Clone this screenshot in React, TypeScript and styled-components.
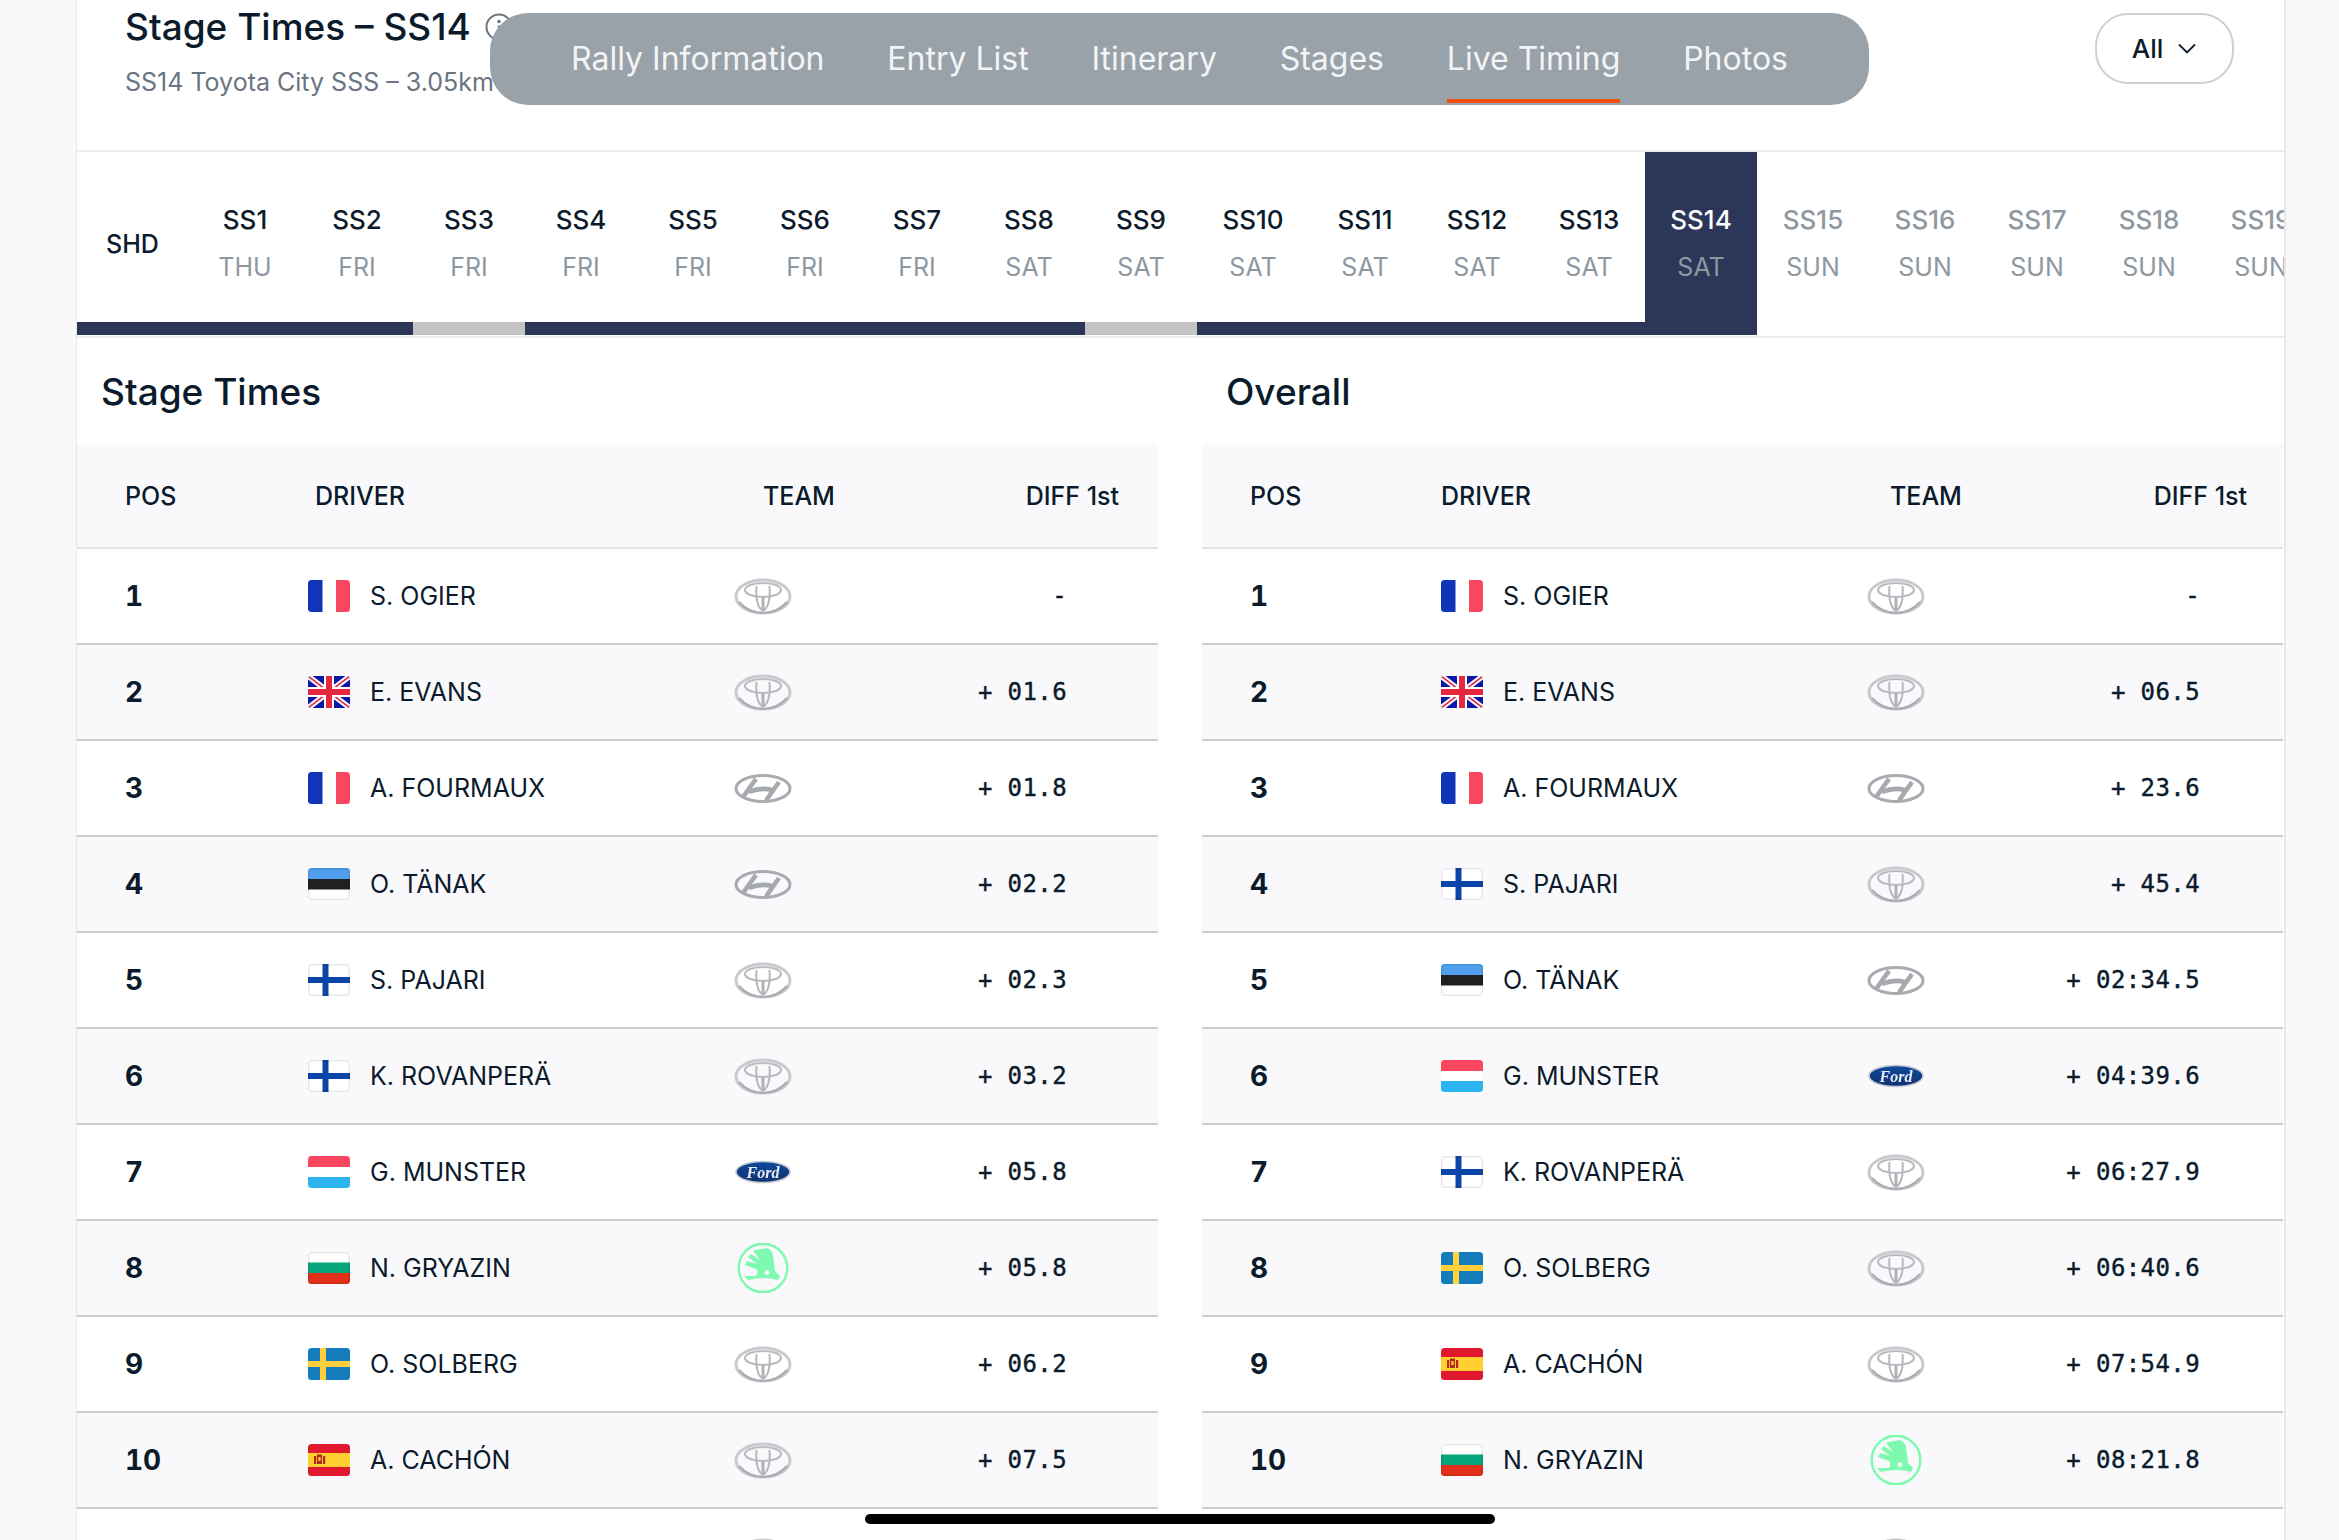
import * as React from "react";
import styled, { createGlobalStyle } from "styled-components";

type FlagCode = "fr" | "gb" | "ee" | "fi" | "lu" | "bg" | "se" | "es";
type TeamCode = "toyota" | "hyundai" | "ford" | "skoda";
type Result = { pos: number; driver: string; flag: FlagCode; team: TeamCode; diff: string };

const stageResults: Result[] = [
  { pos: 1, driver: "S. OGIER", flag: "fr", team: "toyota", diff: "-" },
  { pos: 2, driver: "E. EVANS", flag: "gb", team: "toyota", diff: "+ 01.6" },
  { pos: 3, driver: "A. FOURMAUX", flag: "fr", team: "hyundai", diff: "+ 01.8" },
  { pos: 4, driver: "O. TÄNAK", flag: "ee", team: "hyundai", diff: "+ 02.2" },
  { pos: 5, driver: "S. PAJARI", flag: "fi", team: "toyota", diff: "+ 02.3" },
  { pos: 6, driver: "K. ROVANPERÄ", flag: "fi", team: "toyota", diff: "+ 03.2" },
  { pos: 7, driver: "G. MUNSTER", flag: "lu", team: "ford", diff: "+ 05.8" },
  { pos: 8, driver: "N. GRYAZIN", flag: "bg", team: "skoda", diff: "+ 05.8" },
  { pos: 9, driver: "O. SOLBERG", flag: "se", team: "toyota", diff: "+ 06.2" },
  { pos: 10, driver: "A. CACHÓN", flag: "es", team: "toyota", diff: "+ 07.5" },
];

const overallResults: Result[] = [
  { pos: 1, driver: "S. OGIER", flag: "fr", team: "toyota", diff: "-" },
  { pos: 2, driver: "E. EVANS", flag: "gb", team: "toyota", diff: "+ 06.5" },
  { pos: 3, driver: "A. FOURMAUX", flag: "fr", team: "hyundai", diff: "+ 23.6" },
  { pos: 4, driver: "S. PAJARI", flag: "fi", team: "toyota", diff: "+ 45.4" },
  { pos: 5, driver: "O. TÄNAK", flag: "ee", team: "hyundai", diff: "+ 02:34.5" },
  { pos: 6, driver: "G. MUNSTER", flag: "lu", team: "ford", diff: "+ 04:39.6" },
  { pos: 7, driver: "K. ROVANPERÄ", flag: "fi", team: "toyota", diff: "+ 06:27.9" },
  { pos: 8, driver: "O. SOLBERG", flag: "se", team: "toyota", diff: "+ 06:40.6" },
  { pos: 9, driver: "A. CACHÓN", flag: "es", team: "toyota", diff: "+ 07:54.9" },
  { pos: 10, driver: "N. GRYAZIN", flag: "bg", team: "skoda", diff: "+ 08:21.8" },
];

const days = ["THU", "FRI", "FRI", "FRI", "FRI", "FRI", "FRI", "SAT", "SAT", "SAT", "SAT", "SAT", "SAT", "SAT", "SUN", "SUN", "SUN", "SUN", "SUN"];
const CURRENT_STAGE = 14;
const NOT_RUN = [3, 9];
const navItems = ["Rally Information", "Entry List", "Itinerary", "Stages", "Live Timing", "Photos"];

function Flag({ code }: { code: FlagCode }) {
  const clip = `flag-${code}`;
  const lightEdge = code === "ee" || code === "fi" || code === "bg";
  return (
    <FlagSvg viewBox="0 0 42 32">
      <clipPath id={clip}>
        <rect width="42" height="32" rx="3.5" />
      </clipPath>
      <g clipPath={`url(#${clip})`}>
        <rect width="42" height="32" fill="#fff" />
        {code === "fr" && (
          <>
            <rect width="14.5" height="32" fill="#1035bb" />
            <rect x="28" width="14" height="32" fill="#f8475e" />
          </>
        )}
        {code === "gb" && (
          <>
            <rect width="42" height="32" fill="#0a17a7" />
            <path d="M0 0L42 32M42 0L0 32" stroke="#fff" strokeWidth="5.5" />
            <path d="M0 0L42 32M42 0L0 32" stroke="#e6273e" strokeWidth="1.6" />
            <path d="M21 0V32M0 16H42" stroke="#fff" strokeWidth="10" />
            <path d="M21 0V32M0 16H42" stroke="#e6273e" strokeWidth="6" />
          </>
        )}
        {code === "ee" && (
          <>
            <rect width="42" height="11" fill="#4f9fee" />
            <rect y="11" width="42" height="10.5" fill="#202020" />
          </>
        )}
        {code === "fi" && <path d="M17.5 0V32M0 16H42" stroke="#0b46a8" strokeWidth="6" />}
        {code === "lu" && (
          <>
            <rect width="42" height="11" fill="#f8475e" />
            <rect y="21" width="42" height="11" fill="#2cb5f0" />
          </>
        )}
        {code === "bg" && (
          <>
            <rect y="10.5" width="42" height="11" fill="#07a67c" />
            <rect y="21" width="42" height="11" fill="#e2301a" />
          </>
        )}
        {code === "se" && (
          <>
            <rect width="42" height="32" fill="#157cbb" />
            <path d="M15 0V32M0 16H42" stroke="#ffd03b" strokeWidth="6" />
          </>
        )}
        {code === "es" && (
          <>
            <rect width="42" height="32" fill="#e1192f" />
            <rect y="9" width="42" height="14" fill="#ffd030" />
            <rect x="6" y="12" width="2.2" height="8" fill="#b5261e" />
            <rect x="9" y="10.5" width="5" height="9.5" fill="#b5261e" />
            <rect x="10.4" y="13" width="2.2" height="4" fill="#ffd030" />
            <rect x="15" y="12" width="2.2" height="8" fill="#b5261e" />
          </>
        )}
        {lightEdge && (
          <rect x="0.75" y="0.75" width="40.5" height="30.5" rx="3" fill="none" stroke="#000" strokeOpacity="0.09" strokeWidth="1.5" />
        )}
      </g>
    </FlagSvg>
  );
}

function ToyotaLogo() {
  return (
    <LogoSvg viewBox="0 0 58 37" $soft>
      <ellipse cx="29" cy="18.5" rx="27" ry="16.5" fill="none" stroke="#c8cbce" strokeWidth="3" />
      <path d="M5 24Q15 35 29 35Q43 35 53 24" fill="none" stroke="#a8acb0" strokeWidth="2.2" />
      <ellipse cx="29" cy="12" rx="18" ry="7" fill="none" stroke="#b9bcc0" strokeWidth="2.2" />
      <path d="M22.5 8Q21 28 29 33Q37 28 35.5 8" fill="none" stroke="#b4b8bc" strokeWidth="2" />
      <path d="M27.5 19H30.5V32H27.5Z" fill="#aeb2b6" />
    </LogoSvg>
  );
}

function HyundaiLogo() {
  return (
    <LogoSvg viewBox="0 0 58 37" $soft>
      <ellipse cx="29" cy="18.5" rx="27" ry="13" fill="none" stroke="#a8acb0" strokeWidth="3" />
      <path d="M22 8.8L9 27M45 12L32 30.5M15 22Q27 17 38 20" fill="none" stroke="#a6aaae" strokeWidth="4.6" />
    </LogoSvg>
  );
}

function FordLogo() {
  return (
    <LogoSvg viewBox="0 0 58 37" $soft>
      <defs>
        <linearGradient id="fordBlue" x1="0" y1="0" x2="0" y2="1">
          <stop offset="0" stopColor="#0f4a9e" />
          <stop offset="1" stopColor="#10306f" />
        </linearGradient>
      </defs>
      <ellipse cx="29" cy="18" rx="27" ry="10.5" fill="url(#fordBlue)" stroke="#c2c6ce" strokeWidth="1.6" />
      <FordMark x="29" y="23.5" textAnchor="middle">
        Ford
      </FordMark>
    </LogoSvg>
  );
}

function SkodaLogo() {
  return (
    <LogoSvg viewBox="0 0 58 50" $tall>
      <circle cx="29" cy="25" r="24.3" fill="none" stroke="#7dfab0" strokeWidth="2.4" />
      <path d="M19 7.5L33 5Q38 7 39 12L41 28L46 33L44 37Q30 33 14 37L10 33L22 33Q25 29 22 26L11 22L13 18L23 21L14 14L17 11L26 17Z" fill="#7dfab0" />
      <circle cx="33" cy="29.7" r="2.4" fill="#f9f9fb" />
    </LogoSvg>
  );
}

function TeamLogo({ team }: { team: TeamCode }) {
  if (team === "hyundai") return <HyundaiLogo />;
  if (team === "ford") return <FordLogo />;
  if (team === "skoda") return <SkodaLogo />;
  return <ToyotaLogo />;
}

function ResultsTable({
  title,
  results,
  headCols,
  bodyCols,
  headRight,
  bodyRight,
}: {
  title: string;
  results: Result[];
  headCols: string;
  bodyCols: string;
  headRight: number;
  bodyRight: number;
}) {
  return (
    <TableColumn>
      <SectionTitle>{title}</SectionTitle>
      <HeadRow $cols={headCols} $right={headRight}>
        <span>POS</span>
        <span>DRIVER</span>
        <span>TEAM</span>
        <DiffHead>DIFF 1st</DiffHead>
      </HeadRow>
      {results.map((r, idx) => (
        <Row key={r.pos} $cols={bodyCols} $right={bodyRight} $tinted={idx % 2 === 1}>
          <Pos>{r.pos}</Pos>
          <DriverCell>
            <Flag code={r.flag} />
            {r.driver}
          </DriverCell>
          <TeamLogo team={r.team} />
          <Diff>{r.diff}</Diff>
        </Row>
      ))}
      <Row $cols={bodyCols} $right={bodyRight} $tinted={false}>
        <span />
        <span />
        <ToyotaLogo />
      </Row>
    </TableColumn>
  );
}

export default function App() {
  return (
    <Page>
      <GlobalStyle />
      <Card>
        <TopBar>
          <div>
            <TitleLine>
              Stage Times – SS14
              <InfoIcon viewBox="0 0 28 28">
                <circle cx="14" cy="14" r="12.5" fill="none" stroke="#6b7480" strokeWidth="2" />
                <circle cx="14" cy="8.5" r="1.8" fill="#6b7480" />
                <path d="M14 12.5V20" stroke="#6b7480" strokeWidth="2.4" />
              </InfoIcon>
            </TitleLine>
            <Subtitle>SS14 Toyota City SSS – 3.05km</Subtitle>
          </div>
          <FilterButton>
            All
            <svg width="20" height="13" viewBox="0 0 20 13">
              <path d="M2 2.5L10 10.5L18 2.5" fill="none" stroke="#0b1b2b" strokeWidth="1.8" />
            </svg>
          </FilterButton>
        </TopBar>

        <StageStrip>
          <ShdCell>SHD</ShdCell>
          {days.map((day, idx) => {
            const stage = idx + 1;
            return (
              <StageCell
                key={stage}
                $active={stage === CURRENT_STAGE}
                $done={stage < CURRENT_STAGE}
                $skipped={NOT_RUN.includes(stage)}
              >
                <StageName>SS{stage}</StageName>
                <StageDay>{day}</StageDay>
              </StageCell>
            );
          })}
        </StageStrip>

        <Tables>
          <ResultsTable
            title="Stage Times"
            results={stageResults}
            headCols="190px 448px 80px 1fr"
            bodyCols="183px 426px 80px 1fr"
            headRight={39}
            bodyRight={91}
          />
          <ResultsTable
            title="Overall"
            results={overallResults}
            headCols="191px 449px 80px 1fr"
            bodyCols="191px 426px 80px 1fr"
            headRight={36}
            bodyRight={83}
          />
        </Tables>
      </Card>

      <NavPill>
        {navItems.map((item) => (
          <NavItem key={item} $active={item === "Live Timing"}>
            {item}
          </NavItem>
        ))}
      </NavPill>
      <HomeIndicator />
    </Page>
  );
}

const GlobalStyle = createGlobalStyle`
  html, body {
    margin: 0;
    height: 100%;
    overflow: hidden;
    background: #f8f8f8;
  }
  * {
    box-sizing: border-box;
  }
`;

const Page = styled.div`
  position: relative;
  height: 1540px;
  overflow: hidden;
  padding-left: 76px;
  font-family: Inter, "Liberation Sans", sans-serif;
  color: #0b1b2b;
`;

const Card = styled.main`
  width: 2210px;
  height: 1540px;
  background: #fff;
  border-left: 1px solid #e8e8e8;
  border-right: 2px solid #e8e8e8;
  overflow: hidden;
`;

const TopBar = styled.header`
  height: 152px;
  padding: 5px 50px 0 48px;
  display: flex;
  justify-content: space-between;
  align-items: flex-start;
  border-bottom: 2px solid #ebebeb;
`;

const TitleLine = styled.div`
  display: flex;
  align-items: center;
  gap: 14px;
  font-size: 37px;
  line-height: 44px;
  font-weight: 500;
`;

const InfoIcon = styled.svg`
  width: 28px;
  height: 28px;
`;

const Subtitle = styled.div`
  margin-top: 16px;
  font-size: 25px;
  line-height: 34px;
  color: #6b7480;
`;

const FilterButton = styled.button`
  margin-top: 8px;
  width: 139px;
  height: 71px;
  border: 2px solid #ccd0d4;
  border-radius: 33px;
  background: #fff;
  color: #0b1b2b;
  font-family: inherit;
  font-size: 26px;
  font-weight: 500;
  display: flex;
  align-items: center;
  justify-content: center;
  gap: 14px;
`;

const NavPill = styled.nav`
  position: absolute;
  top: 13px;
  left: 490px;
  width: 1379px;
  height: 92px;
  padding: 0 81px;
  display: flex;
  justify-content: space-between;
  background: #99a1a9;
  border-radius: 38px;
`;

const NavItem = styled.a<{ $active: boolean }>`
  height: 90px;
  padding-top: 4px;
  display: flex;
  align-items: center;
  font-size: 32px;
  white-space: nowrap;
  color: #f2f4f6;
  border-bottom: 4px solid ${(p) => (p.$active ? "#f0500f" : "transparent")};
`;

const StageStrip = styled.div`
  display: flex;
  height: 186px;
  padding-bottom: 1px;
  border-bottom: 2px solid #ebebeb;
`;

const ShdCell = styled.div`
  flex: 0 0 112px;
  padding: 13px 0 0 29px;
  display: flex;
  align-items: center;
  font-size: 25px;
  font-weight: 500;
  border-bottom: 13px solid #2b3658;
`;

const stageColor = (p: { $active: boolean; $done: boolean }) => {
  if (p.$active) return "#fff";
  return p.$done ? "#0b1b2b" : "#8f97a1";
};

const stageBar = (p: { $active: boolean; $done: boolean; $skipped: boolean }) => {
  if (p.$active) return "#2b3658";
  if (!p.$done) return "transparent";
  return p.$skipped ? "#c4c4c4" : "#2b3658";
};

const StageCell = styled.div<{ $active: boolean; $done: boolean; $skipped: boolean }>`
  flex: 0 0 112px;
  display: flex;
  flex-direction: column;
  align-items: center;
  padding-top: 50px;
  border-bottom: 13px solid ${stageBar};
  background: ${(p) => (p.$active ? "#2b3658" : "transparent")};
  color: ${stageColor};
`;

const StageName = styled.div`
  font-size: 26px;
  line-height: 36px;
  font-weight: 500;
  white-space: nowrap;
`;

const StageDay = styled.div`
  margin-top: 11px;
  font-size: 25px;
  line-height: 36px;
  color: #8f97a1;
  white-space: nowrap;
`;

const Tables = styled.div`
  display: flex;
  gap: 44px;
`;

const TableColumn = styled.section`
  flex: 0 0 1081px;
`;

const SectionTitle = styled.h2`
  margin: 0;
  height: 106px;
  padding-left: 24px;
  display: flex;
  align-items: center;
  font-size: 37px;
  font-weight: 500;
`;

const HeadRow = styled.div<{ $cols: string; $right: number }>`
  height: 105px;
  padding: 0 ${(p) => p.$right}px 0 48px;
  display: grid;
  grid-template-columns: ${(p) => p.$cols};
  align-items: center;
  background: #f9f9fb;
  border-bottom: 2px solid #e4e4e8;
  font-size: 25px;
  font-weight: 500;
`;

const DiffHead = styled.span`
  text-align: right;
`;

const Row = styled.div<{ $cols: string; $right: number; $tinted: boolean }>`
  height: 96px;
  padding: 0 ${(p) => p.$right}px 0 48px;
  display: grid;
  grid-template-columns: ${(p) => p.$cols};
  align-items: center;
  background: ${(p) => (p.$tinted ? "#f9f9fb" : "#fff")};
  border-bottom: 2px solid #c9cdd1;
`;

const Pos = styled.span`
  font-size: 28px;
  font-weight: 700;
  font-variant-numeric: tabular-nums;
`;

const DriverCell = styled.span`
  display: flex;
  align-items: center;
  gap: 20px;
  font-size: 25px;
  white-space: nowrap;
`;

const FlagSvg = styled.svg`
  width: 42px;
  height: 32px;
  flex: none;
`;

const LogoSvg = styled.svg<{ $soft?: boolean; $tall?: boolean }>`
  width: 58px;
  height: ${(p) => (p.$tall ? 50 : 37)}px;
  display: block;
  filter: ${(p) => (p.$soft ? "blur(0.5px)" : "none")};
`;

const FordMark = styled.text`
  font-family: "Liberation Serif", serif;
  font-style: italic;
  font-weight: 700;
  font-size: 16px;
  fill: #e8edf6;
`;

const Diff = styled.span`
  text-align: right;
  font-family: "DejaVu Sans Mono", "Liberation Mono", monospace;
  font-size: 24px;
  letter-spacing: 0.4px;
  -webkit-text-stroke: 0.4px #0b1b2b;
  white-space: pre;
`;

const HomeIndicator = styled.div`
  position: absolute;
  left: 865px;
  top: 1514px;
  width: 630px;
  height: 10px;
  border-radius: 5px;
  background: #000;
`;
